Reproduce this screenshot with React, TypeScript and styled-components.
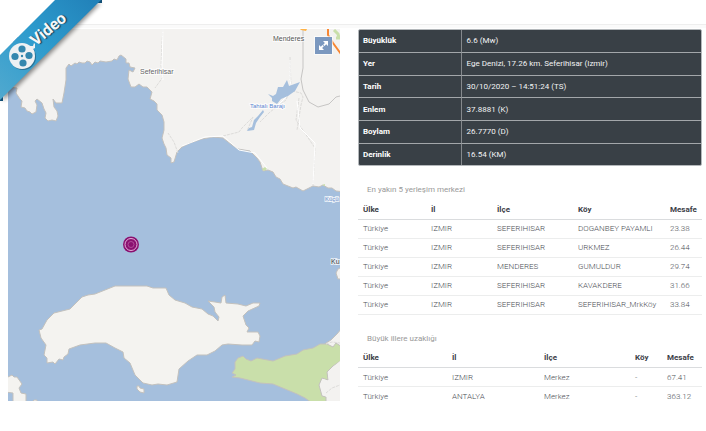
import React from "react";
import styled, { createGlobalStyle, css } from "styled-components";

const GlobalStyle = createGlobalStyle`
  *, *::before, *::after { box-sizing: border-box; }
  body {
    margin: 0;
    background: #fff;
    color: #3a3f45;
    font-family: Roboto, "Liberation Sans", sans-serif;
    font-size: 8px;
    line-height: 12px;
  }
`;

const Page = styled.div`
  position: relative;
  overflow: hidden;
`;

const TopBar = styled.header`
  height: 28px;
  border-bottom: 3px solid #fafafa;
  box-shadow: inset 0 -1px 0 #eeeeee;
`;

const Content = styled.main`
  display: grid;
  grid-template-columns: minmax(0, 332fr) minmax(0, 344fr);
  gap: 18px;
  padding: 1px 4px 24px 8px;
  align-items: start;
`;

const MapPanel = styled.section`
  position: relative;
  aspect-ratio: 332 / 372;
  overflow: hidden;
  background: #a5bfdd;
`;

const MapDrawing = styled.svg`
  display: block;
  width: 100%;
  height: 100%;
`;

const MapButton = styled.button<{ $side: "left" | "right" }>`
  position: absolute;
  top: 8px;
  ${(p) => (p.$side === "left" ? css`left: 5px;` : css`right: 8px;`)}
  display: grid;
  place-items: center;
  width: 17px;
  height: 17px;
  padding: 0;
  border: 0;
  background: #7b98bf;
  box-shadow: 0 0 0 1px rgba(255, 255, 255, 0.6);
  color: #fff;
  cursor: pointer;
`;

const Details = styled.aside`
  display: flex;
  flex-direction: column;
`;

const InfoTable = styled.table`
  width: 100%;
  height: 137px;
  border-collapse: separate;
  border-spacing: 0;
  border: 1px solid #b4b8bb;
  border-radius: 2px;
  overflow: hidden;
  background: #394046;
  color: #f2f3f4;
  table-layout: fixed;

  th, td {
    padding: 1px 5px 0;
    text-align: left;
    border-bottom: 1px solid #a3a7aa;
  }
  th {
    width: 30%;
    font-weight: 700;
    color: #fff;
    border-right: 1px solid #85898d;
    padding-left: 4px;
  }
  tr:last-child > * { border-bottom: 0; }
`;

const DistanceTable = styled.table`
  width: 100%;
  border-collapse: collapse;
  table-layout: fixed;

  caption {
    height: 20px;
    padding: 4px 9px;
    text-align: left;
    color: #999;
    white-space: nowrap;
  }
  th, td {
    height: 19px;
    padding: 1px 5px 0;
    text-align: left;
    white-space: nowrap;
  }
  th {
    font-weight: 700;
    color: #3c4047;
    border-bottom: 1px solid #dadcde;
  }
  td {
    font-weight: 300;
    color: #4c4f56;
    border-bottom: 1px solid #eceded;
  }
`;

const Nearest = styled.div`
  margin-top: 14px;
`;

const Cities = styled.div`
  margin-top: 14px;

  tr:last-child td { border-bottom: 0; }
`;

const Ribbon = styled.a`
  position: absolute;
  top: 0;
  left: 0;
  display: block;
  width: 108px;
  height: 108px;
  pointer-events: none;
  text-decoration: none;
`;

const info = [
  ["Büyüklük", "6.6 (Mw)"],
  ["Yer", "Ege Denizi, 17.26 km. Seferihisar (Izmir)"],
  ["Tarih", "30/10/2020 – 14:51:24 (TS)"],
  ["Enlem", "37.8881 (K)"],
  ["Boylam", "26.7770 (D)"],
  ["Derinlik", "16.54 (KM)"],
];

const headings = ["Ülke", "İl", "İlçe", "Köy", "Mesafe"];

const nearest = [
  ["Türkiye", "IZMIR", "SEFERIHISAR", "DOGANBEY PAYAMLI", "23.38"],
  ["Türkiye", "IZMIR", "SEFERIHISAR", "URKMEZ", "26.44"],
  ["Türkiye", "IZMIR", "MENDERES", "GUMULDUR", "29.74"],
  ["Türkiye", "IZMIR", "SEFERIHISAR", "KAVAKDERE", "31.66"],
  ["Türkiye", "IZMIR", "SEFERIHISAR", "SEFERIHISAR_MrkKöy", "33.84"],
];

const cities = [
  ["Türkiye", "IZMIR", "Merkez", "-", "67.41"],
  ["Türkiye", "ANTALYA", "Merkez", "-", "363.12"],
];

function Distances(props: { title: string; widths: number[]; rows: string[][] }) {
  const total = props.widths.reduce((a, b) => a + b, 0);
  return (
    <DistanceTable>
      <caption>{props.title}</caption>
      <colgroup>
        {props.widths.map((w, i) => (
          <col key={i} style={{ width: `${(w / total) * 100}%` }} />
        ))}
      </colgroup>
      <thead>
        <tr>
          {headings.map((h) => (
            <th key={h} scope="col">{h}</th>
          ))}
        </tr>
      </thead>
      <tbody>
        {props.rows.map((row, i) => (
          <tr key={i}>
            {row.map((cell, j) => (
              <td key={j}>{cell}</td>
            ))}
          </tr>
        ))}
      </tbody>
    </DistanceTable>
  );
}

function EpicenterMap() {
  return (
    <MapDrawing viewBox="8 29 332 372" preserveAspectRatio="xMidYMid slice">
      <g stroke="#c3c1bd" strokeWidth="1" strokeLinejoin="round">
        {/* mainland coast */}
        <path
          fill="#f3f2f0"
          d="M0 20V86L17 88 16 93 20 99 22 101 21 107 25 108 27 111 30 112 32 114 36 112 37 105 35 101 37 99 42 103 44 109 46 113 45 118 48 121 52 120 56 121 58 116 57 111 54 107 53 99 56 103 62 103 64 93 66 80 66 68 69 64 71 66 75 63 77 64 79 62 82 63 85 63 87 61 90 62 92 65 95 62 98 63 100 61 106 62 112 61 114 59 117 60 119 56 121 55 126 59 126 63 129 63 130 67 135 68 133 72 129 70 128 79 131 87 135 87 139 84 143 87 147 87 152 92 150 99 154 101 157 104 157 110 162 115 164 122 164 130 162 138 164 144 166 148 167 155 171 158 171 163 174 162 177 152 182 147 190 143 202 139 213 137 223 138 232 145 238 149 250 151 257 158 260 162 263 171 268 170 273 172 276 177 280 179 283 184 293 188 296 187 303 191 309 188 313 186 319 187 323 185 328 188 332 188 336 191 345 192V20Z"
        />
        <path
          fill="#f4f3f0"
          d="M39 330 42 329 47 320 54 313 70 309 82 297 88 295 95 294 115 286H147L153 288 166 288 169 295 175 300 185 303 192 307 202 309 208 314 213 316 218 321 219 317 215 312 214 307 208 301 215 302 221 303 222 297 225 295 226 303 238 304 246 306 253 303 260 303 259 306 248 311 243 316 246 325 249 328 247 332 258 332 260 336 259 342 255 341 252 345 242 345 228 344 222 345 215 351 207 355H197L188 361 179 369 177 382 167 385 158 384 152 385 143 383 135 375 130 363 124 358 123 352 115 348 106 343H95L80 345 69 349 68 354 64 357 63 360 59 359 55 364 53 362 47 363 47 358 44 355 46 345 41 338Z"
        />
        <path fill="#f4f3f0" d="M137 386 139 386 140 388 144 389 144 393 140 392 137 389Z" />
        <path fill="#f4f3f0" d="M5 378 8 377 12 375 14 377 17 377 22 384 19 388 21 393 26 394V405H13V393L5 392Z" />
        <path fill="#f4f3f0" d="M33 401 34 400H37V403H33Z" />
        <path fill="#f3f2f0" d="M326 343 331 340 337 334 342 328V405H318V350Z" />
        <path fill="#f3f2f0" d="M342 267 338 269 336 273 338 279H342Z" />
        <path
          fill="#c9dfaa"
          d="M232 373 235 369 235 362 238 358 243 356 246 359 251 361 257 358 273 361 285 356 297 354 303 350 313 348 320 344 327 344 333 347 336 343 342 347V360L333 366 327 372 328 380 322 378 319 385 322 396 326 397V405H315L305 398 297 394 285 389 273 384 260 383 240 378 232 377 236 375Z"
        />
      </g>
      <path fill="#f3f2f0" d="M340 361 333 367 328 373 329 381 323 379 320 385 323 395 327 397V401H340Z" />
      <g fill="none" stroke="#dddcda" strokeWidth="1" strokeDasharray="3 1">
        <path d="M326 393 332 388 340 385M326 344 332 342 340 343" />
        <path d="M163 29 162 43 161 66 163 77 155 88M178 153 174 142 168 133" />
        <path d="M290 57 291 87 286 100 270 112 260 122M290 60V80L292 91 275 108M292 91 301 93 303 97 301 105 297 130" />
        <path d="M223 136 239 132 242 128 253 117 247 131M299 98 296 120 315 148 313 186" />
      </g>
      <g fill="none" stroke="#ffffff" strokeWidth="1">
        <path d="M163 29 162 66 163 80M182 146 205 137 223 136 239 150 255 153 267 168M290 60V80L292 91 275 108" />
        <path d="M297 101 300 128 315 143 313 184" />
      </g>
      <path d="M303 31V69L301 80 303 91 309 103 318 108 329 105 336 98 340 97" transform="translate(0 -1)" fill="none" stroke="#c6c5c4" />
      <g fill="#a5bfdd">
        <path d="M268 94 273 96 276 94 278 87 283 87 287 80 289 86 300 82 295 91 288 96 281 99 277 104 272 101 272 98Z" />
        <path d="M263 110 264 112 260 117 256 123 254 130 247 131 249 128 252 127 254 120 258 116Z" />
      </g>
      <path d="M262 169 265 167 267 169 264 171ZM322 185 325 184 325 186Z" fill="#c9dfaa" />
      <path d="M8 29H15L12 31H8ZM300 29H307L306 31 301 30Z" fill="#ffb347" />
      <path d="M334 30 338 34 339 38H336" fill="none" stroke="#c9dfaa" strokeWidth="3" />
      <path d="M328 28V35L333 43 341 54" fill="none" stroke="#f78632" strokeWidth="2" />
      <g fontFamily='"Liberation Sans", sans-serif' fontSize="7" stroke="#fff" strokeWidth="2" strokeOpacity=".7" paintOrder="stroke">
        <text x="140" y="74" fill="#666">Seferihisar</text>
        <text x="273" y="41" fill="#555">Menderes</text>
        <text x="331" y="264" fill="#444">Ku</text>
        <g fontSize="6">
          <text x="250" y="108" fill="#5c87d1">Tahtalı Barajı</text>
          <text x="325" y="201" fill="#6d8fcb">Küçü</text>
        </g>
      </g>
      <g fill="none">
        <circle cx="131" cy="244.500" r="8" fill="#8a1070" />
        <circle cx="131" cy="244.500" r="6" stroke="#e3b0da" />
        <circle cx="131" cy="244.500" r="3" stroke="#b04c9a" />
      </g>
    </MapDrawing>
  );
}

function VideoRibbon() {
  return (
    <Ribbon href="#video">
      <svg width="108" height="108" viewBox="0 0 108 108">
        <defs>
          <linearGradient id="band" x1="0" y1="101" x2="101" y2="0" gradientUnits="userSpaceOnUse">
            <stop offset="0" stopColor="#51a9cf" />
            <stop offset="0.5" stopColor="#2d9bcd" />
            <stop offset="1" stopColor="#2180b8" />
          </linearGradient>
          <filter id="soft" x="-10%" y="-10%" width="130%" height="130%">
            <feGaussianBlur stdDeviation="2" />
          </filter>
        </defs>
        <path d="M3 58 58 3 101 3 3 101Z" fill="#000" opacity=".45" filter="url(#soft)" />
        <path d="M0 0H55L0 55Z" fill="#fff" />
        <path d="M98 0H102V3H98ZM0 97H3V101H0Z" fill="#124e74" />
        <path d="M0 55 55 0H101L0 100Z" fill="url(#band)" />
        <circle cx="23" cy="57" r="13" fill="#20536e" opacity=".6" />
        <path d="M28 46 33 46 34 43 35 44 35 48 33 49 35 53Z" fill="#eef1f3" />
        <circle cx="22" cy="56" r="13" fill="#eef1f3" />
        <g fill="#3487ae">
          <circle cx="22" cy="49" r="3.600" />
          <circle cx="29" cy="55.500" r="3.600" />
          <circle cx="23" cy="63" r="3.600" />
          <circle cx="15" cy="56.500" r="3.600" />
          <circle cx="22" cy="56" r="1.200" />
        </g>
        <g fontFamily='Roboto, "Liberation Sans", sans-serif' fontWeight="700" fontSize="16" transform="rotate(-40 38 46)">
          <text x="36" y="45" fill="#f4f7f9" style={{ textShadow: "1px 1px 1px #16445f" }}>Video</text>
        </g>
      </svg>
    </Ribbon>
  );
}

export default function App() {
  return (
    <>
      <GlobalStyle />
      <Page>
        <TopBar />
        <Content>
          <MapPanel>
            <EpicenterMap />
            <MapButton $side="left" type="button" aria-label="Yakınlaştır" />
            <MapButton $side="right" type="button" aria-label="Tam ekran">
              <svg width="11" height="11" viewBox="0 0 11 11">
                <path d="M5 1H10V6L8.200 4.200 6.500 6 5.200 4.700 6.900 2.900ZM6 10H1V5L2.800 6.800 4.500 5 5.800 6.300 4.100 8.100Z" fill="currentColor" />
              </svg>
            </MapButton>
          </MapPanel>
          <Details>
            <InfoTable>
              <tbody>
                {info.map(([label, value]) => (
                  <tr key={label}>
                    <th scope="row">{label}</th>
                    <td>{value}</td>
                  </tr>
                ))}
              </tbody>
            </InfoTable>
            <Nearest>
              <Distances title="En yakın 5 yerleşim merkezi" widths={[68, 66, 81, 92, 37]} rows={nearest} />
            </Nearest>
            <Cities>
              <Distances title="Büyük illere uzaklığı" widths={[89, 92, 91, 32, 40]} rows={cities} />
            </Cities>
          </Details>
        </Content>
        <VideoRibbon />
      </Page>
    </>
  );
}
